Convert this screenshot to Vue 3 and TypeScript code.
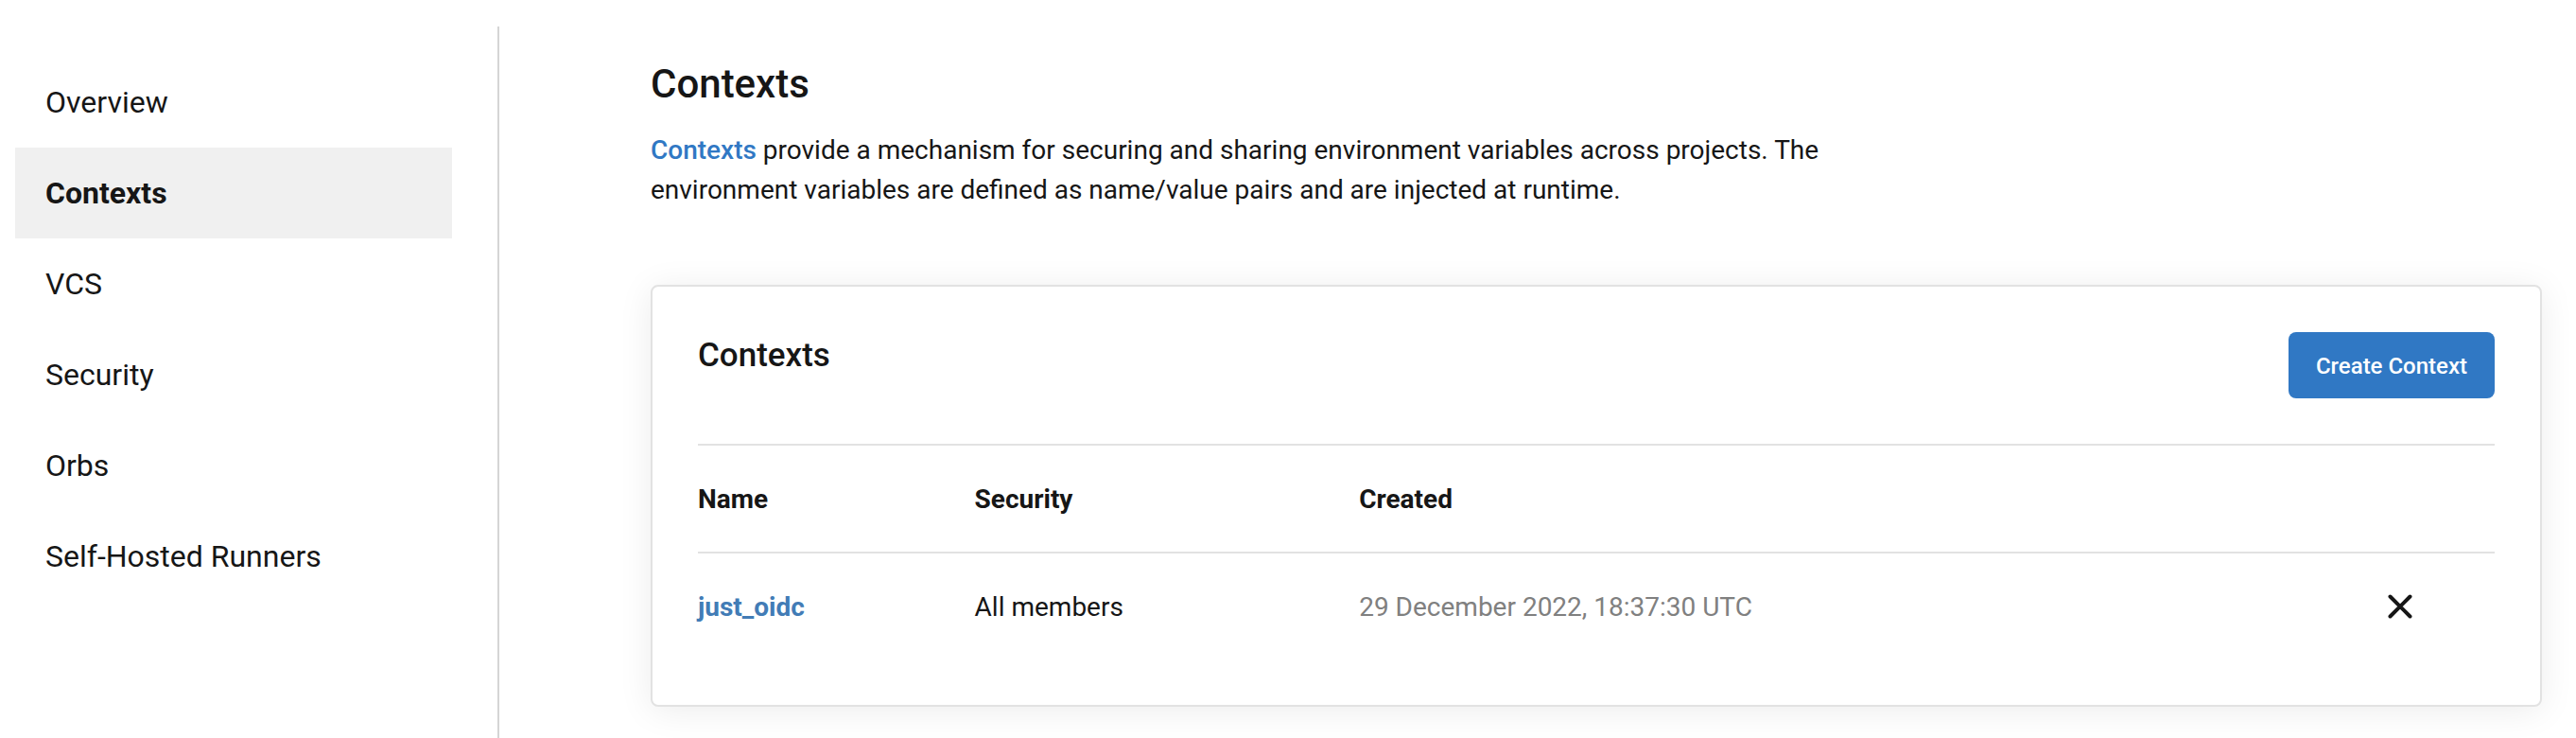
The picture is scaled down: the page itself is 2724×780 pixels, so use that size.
<script setup lang="ts">
import { ref } from 'vue'

interface ContextRow {
  name: string
  security: string
  created: string
}

const navItems: string[] = ['Overview', 'Contexts', 'VCS', 'Security', 'Orbs', 'Self-Hosted Runners']
const active = ref<string>('Contexts')

const contexts = ref<ContextRow[]>([
  { name: 'just_oidc', security: 'All members', created: '29 December 2022, 18:37:30 UTC' },
])

function removeContext(name: string): void {
  contexts.value = contexts.value.filter((c) => c.name !== name)
}
</script>

<template>
  <div class="page">
    <nav class="sidebar" aria-label="Organization settings">
      <a
        v-for="item in navItems"
        :key="item"
        href="#"
        class="nav-link"
        :class="{ active: item === active }"
        :aria-current="item === active ? 'page' : undefined"
        @click.prevent="active = item"
      >{{ item }}</a>
    </nav>

    <main class="content">
      <h1 class="title">Contexts</h1>
      <p class="intro">
        <a href="#" class="intro-link">Contexts</a> provide a mechanism for securing and sharing environment
        variables across projects. The environment variables are defined as name/value pairs and are injected at
        runtime.
      </p>

      <section class="card">
        <header class="card-header">
          <h2 class="card-title">Contexts</h2>
          <button type="button" class="create">Create Context</button>
        </header>
        <table class="table">
          <thead>
            <tr>
              <th scope="col" class="col-name">Name</th>
              <th scope="col" class="col-security">Security</th>
              <th scope="col">Created</th>
              <td class="col-action"></td>
            </tr>
          </thead>
          <tbody>
            <tr v-for="row in contexts" :key="row.name">
              <td><a href="#" class="context-link">{{ row.name }}</a></td>
              <td>{{ row.security }}</td>
              <td class="created">{{ row.created }}</td>
              <td class="col-action">
                <button type="button" class="remove" :aria-label="`Remove ${row.name}`" @click="removeContext(row.name)">
                  <svg viewBox="0 0 32 32" width="32" height="32" aria-hidden="true">
                    <path d="M5.5 5.5 26.5 26.5M26.5 5.5 5.5 26.5" />
                  </svg>
                </button>
              </td>
            </tr>
          </tbody>
        </table>
      </section>
    </main>
  </div>
</template>

<style>
body {
  margin: 0;
  background: #fff;
}
</style>

<style scoped>
.page {
  display: flex;
  box-sizing: border-box;
  min-height: 100vh;
  padding-top: 28px;
  font-family: Roboto, 'Liberation Sans', sans-serif;
  font-size: 28px;
  line-height: 42px;
  color: #161616;
}

.sidebar {
  display: flex;
  flex-direction: column;
  box-sizing: border-box;
  flex: 0 0 528px;
  padding: 32px 48px 32px 16px;
  border-right: 2px solid #d5d5d5;
}

.nav-link {
  padding: 24px 32px;
  font-size: 32px;
  line-height: 48px;
  color: inherit;
  text-decoration: none;
}

.nav-link.active {
  background: #f0f0f0;
  font-weight: 700;
}

.content {
  flex: 1;
  min-width: 0;
  padding: 36px 36px 32px 160px;
}

.title {
  margin: 0 0 24px;
  font-size: 42px;
  line-height: 50px;
  font-weight: 500;
}

.intro {
  max-width: 1280px;
  margin: 0 0 79px;
}

.intro-link {
  color: #3078c4;
  font-weight: 500;
  text-decoration: none;
}

.card {
  padding: 48px;
  border: 2px solid #e2e2e2;
  border-radius: 8px;
  background: #fff;
  box-shadow: 0 4px 36px rgba(0, 0, 0, 0.08);
}

.card-header {
  display: flex;
  align-items: flex-start;
  justify-content: space-between;
  padding-bottom: 48px;
}

.card-title {
  margin: 0;
  font-size: 35px;
  line-height: 50px;
  font-weight: 500;
}

.create {
  height: 70px;
  padding: 2px 29px 0;
  border: 0;
  border-radius: 8px;
  background: #3078c4;
  color: #fff;
  font: inherit;
  font-size: 24px;
  font-weight: 500;
  cursor: pointer;
}

.table {
  width: 100%;
  table-layout: fixed;
  border-spacing: 0;
  text-align: left;
}

.table th,
.table td {
  height: 110px;
  padding: 2px 0 0;
  border-top: 2px solid #e2e2e2;
}

.table th {
  font-weight: 700;
}

.col-name {
  width: 15.4%;
}

.col-security {
  width: 21.4%;
}

.table .col-action {
  width: 200px;
  padding: 0;
  text-align: center;
}

.context-link {
  color: #427cb6;
  font-weight: 700;
  text-decoration: none;
}

.table .created {
  color: #808080;
}

.remove {
  display: inline-flex;
  padding: 8px;
  border: 0;
  background: none;
  color: inherit;
  vertical-align: middle;
  cursor: pointer;
}

.remove path {
  fill: none;
  stroke: currentColor;
  stroke-width: 4;
  stroke-linecap: round;
}
</style>
